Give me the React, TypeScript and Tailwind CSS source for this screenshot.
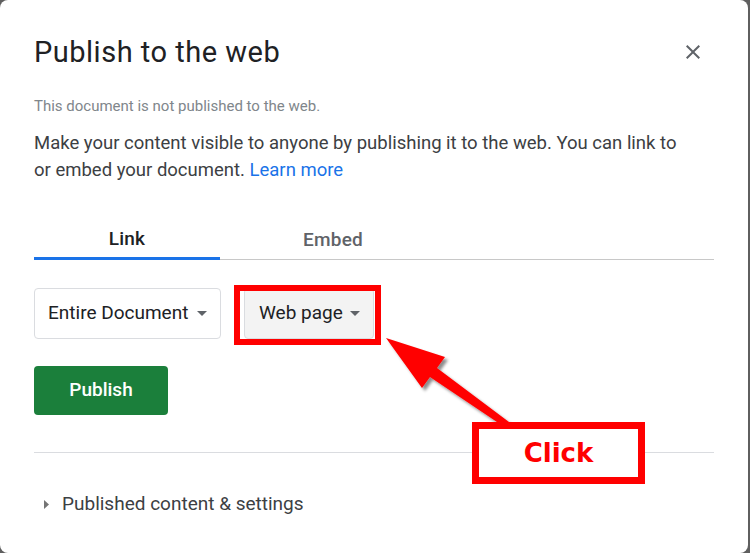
import React from "react";

function CaretDown() {
    return (
        <svg width="10" height="5" viewBox="0 0 10 5" className="shrink-0">
            <path d="M0 0l5 5 5-5z" fill="#5f6368" />
        </svg>
    );
}

function Annotations() {
    return (
        <>
            <div className="absolute left-[234px] top-[285px] w-[147px] h-[60px] border-[6px] border-[#ff0000]" />
            <svg className="absolute left-0 top-0 pointer-events-none" width="750" height="553">
                <defs>
                    <filter id="shadow" x="-20%" y="-20%" width="140%" height="140%">
                        <feDropShadow dx="3" dy="3" stdDeviation="1.5" floodColor="#000" floodOpacity="0.45" />
                    </filter>
                </defs>
                <polygon
                    points="386,338 445,357 437,368 509,422 497,422 430,377 422,388"
                    fill="#ff0000"
                    filter="url(#shadow)"
                />
            </svg>
            <div className="absolute left-[472px] top-[422px] w-[173px] h-[62px] border-[7px] border-[#ff0000] bg-white flex items-center justify-center">
                <span className="text-[26px] font-bold text-[#ff0000] font-['DejaVu_Sans',sans-serif] leading-none">
                    Click
                </span>
            </div>
        </>
    );
}

export default function App() {
    return (
        <div className="relative w-[750px] h-[553px] bg-[#5f5f5f] overflow-hidden font-['Roboto',sans-serif]">
            <div className="w-[748px] h-[553px] bg-white rounded-lg px-[34px] flex flex-col">
                <div className="flex flex-row justify-between items-center pt-[34px]">
                    <h1 className="text-[29px] leading-[36px] tracking-[0.5px] text-[#202124]">Publish to the web</h1>
                    <button className="w-6 h-6 mr-[9px] flex items-center justify-center" aria-label="Close">
                        <svg width="24" height="24" viewBox="0 0 24 24">
                            <path
                                d="M19 6.41L17.59 5 12 10.59 6.41 5 5 6.41 10.59 12 5 17.59 6.41 19 12 13.41 17.59 19 19 17.59 13.41 12z"
                                fill="#5f6368"
                            />
                        </svg>
                    </button>
                </div>

                <p className="mt-[26px] text-[15px] leading-[20px] text-[#80868b]">
                    This document is not published to the web.
                </p>
                <p className="mt-[14px] text-[18.5px] leading-[27px] text-[#3c4043] whitespace-nowrap">
                    Make your content visible to anyone by publishing it to the web. You can link to
                    <br />
                    or embed your document. <a className="text-[#1a73e8]">Learn more</a>
                </p>

                <div className="mt-[31px] flex flex-row items-end">
                    <div className="w-[186px] h-[45px] pt-[6px] flex items-center justify-center border-b-[3px] border-[#1a73e8] text-[19px] tracking-[0.2px] font-medium text-[#202124]">
                        Link
                    </div>
                    <div className="w-[226px] h-[45px] pt-[6px] flex items-center justify-center border-b border-[#c8c8c8] text-[19px] tracking-[0.2px] font-medium text-[#5f6368]">
                        Embed
                    </div>
                    <div className="flex-1 h-[45px] border-b border-[#c8c8c8]" />
                </div>

                <div className="mt-[28px] flex flex-row gap-[23px]">
                    <div className="w-[187px] h-[51px] pl-[13px] pr-[13px] flex flex-row items-center justify-between border border-[#dadce0] rounded-[4px] text-[19px] text-[#202124]">
                        <span>Entire Document</span>
                        <CaretDown />
                    </div>
                    <div className="w-[130px] h-[51px] pl-[14px] pr-[13px] flex flex-row items-center justify-between border border-[#dadce0] rounded-[4px] bg-[#f3f3f3] text-[19px] text-[#202124]">
                        <span>Web page</span>
                        <CaretDown />
                    </div>
                </div>

                <div className="mt-[27px]">
                    <button className="w-[134px] h-[49px] bg-[#1b7f3b] rounded-[4px] text-white text-[19px] font-medium">
                        Publish
                    </button>
                </div>

                <div className="mt-[37px] border-t border-[#dadce0]" />

                <div className="mt-[37px] flex flex-row items-center gap-[13px] pl-[10px]">
                    <svg width="5" height="9" viewBox="0 0 5 9">
                        <path d="M0 0l5 4.5L0 9z" fill="#757575" />
                    </svg>
                    <span className="text-[19px] text-[#3c4043]">Published content &amp; settings</span>
                </div>
            </div>
            <Annotations />
        </div>
    );
}
